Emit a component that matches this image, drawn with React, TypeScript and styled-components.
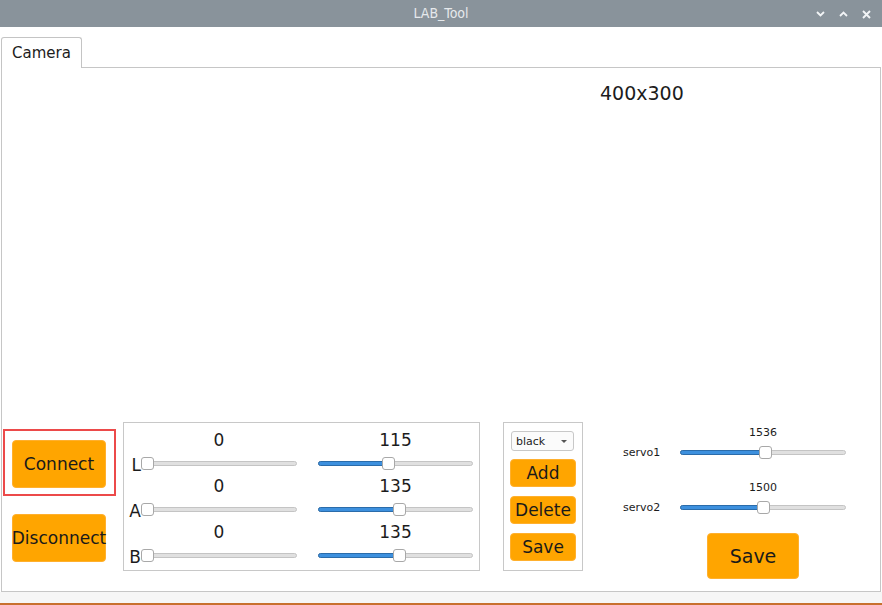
import React from 'react';
import styled, { createGlobalStyle } from 'styled-components';

const GlobalStyle = createGlobalStyle`
  html, body {
    margin: 0;
    padding: 0;
    background: #ffffff;
  }
  body {
    font-family: "DejaVu Sans", "Liberation Sans", sans-serif;
    color: #1c1c1c;
  }
`;

type SliderProps = { width: number; value: number; min: number; max: number };

const Slider = ({ width, value, min, max }: SliderProps) => {
  const pos = ((value - min) / (max - min)) * (width - 13);
  return (
    <StSlider $width={width}>
      <StGroove />
      {pos > 0 && <StFill style={{ width: pos + 6 }} />}
      <StHandle style={{ left: pos }} />
    </StSlider>
  );
};

const ChevronDown = () => (
  <svg width="9" height="6" viewBox="0 0 9 6">
    <path d="M1 1 L4.5 4.5 L8 1" fill="none" stroke="#f2f4f6" strokeWidth="1.8" />
  </svg>
);

const ChevronUp = () => (
  <svg width="9" height="6" viewBox="0 0 9 6">
    <path d="M1 5 L4.5 1.5 L8 5" fill="none" stroke="#f2f4f6" strokeWidth="1.8" />
  </svg>
);

const CloseIcon = () => (
  <svg width="9" height="9" viewBox="0 0 9 9">
    <path d="M1 1 L8 8 M8 1 L1 8" fill="none" stroke="#f2f4f6" strokeWidth="1.9" />
  </svg>
);

const channels = [
  { name: 'L', low: 0, high: 115 },
  { name: 'A', low: 0, high: 135 },
  { name: 'B', low: 0, high: 135 },
];

const servos = [
  { name: 'servo1', value: 1536 },
  { name: 'servo2', value: 1500 },
];

const App = () => {
  return (
    <StRoot>
      <GlobalStyle />
      <StTitleBar>
        <span />
        <StTitle>LAB_Tool</StTitle>
        <StControls>
          <ChevronDown />
          <ChevronUp />
          <CloseIcon />
        </StControls>
      </StTitleBar>

      <StTabBar>
        <StTab>Camera</StTab>
      </StTabBar>

      <StPane>
        <StSizeLabel>400x300</StSizeLabel>

        <StBottomRow>
          <StConnectColumn>
            <StHighlight>
              <StOrangeButton $w={94} $h={48} $size={17}>
                Connect
              </StOrangeButton>
            </StHighlight>
            <StDisconnectWrap>
              <StOrangeButton $w={94} $h={48} $size={17}>
                Disconnect
              </StOrangeButton>
            </StDisconnectWrap>
          </StConnectColumn>

          <StLabGroup>
            {channels.map((c) => (
              <React.Fragment key={c.name}>
                <StValue $col={2}>{c.low}</StValue>
                <StValue $col={4}>{c.high}</StValue>
                <StChannelLabel>{c.name}</StChannelLabel>
                <StSliderCell $col={2}>
                  <Slider width={156} value={c.low} min={0} max={255} />
                </StSliderCell>
                <StSliderCell $col={4}>
                  <Slider width={155} value={c.high} min={0} max={255} />
                </StSliderCell>
              </React.Fragment>
            ))}
          </StLabGroup>

          <StColorGroup>
            <StCombo>
              <span>black</span>
              <StComboArrow />
            </StCombo>
            <StOrangeButton $w={66} $h={28} $size={17}>
              Add
            </StOrangeButton>
            <StOrangeButton $w={66} $h={28} $size={17}>
              Delete
            </StOrangeButton>
            <StOrangeButton $w={66} $h={28} $size={17}>
              Save
            </StOrangeButton>
          </StColorGroup>

          <StServoPanel>
            {servos.map((s) => (
              <StServoBlock key={s.name}>
                <StServoValue>{s.value}</StServoValue>
                <StServoLabel>{s.name}</StServoLabel>
                <StSliderCell $col={2}>
                  <Slider width={166} value={s.value} min={500} max={2500} />
                </StSliderCell>
              </StServoBlock>
            ))}
            <StSaveWrap>
              <StOrangeButton $w={92} $h={46} $size={19}>
                Save
              </StOrangeButton>
            </StSaveWrap>
          </StServoPanel>
        </StBottomRow>
      </StPane>

      <StFooter />
      <StTaskLine />
    </StRoot>
  );
};

export default App;

const StRoot = styled.div`
  width: 882px;
  height: 605px;
  display: flex;
  flex-direction: column;
  overflow: hidden;
  background: #ffffff;
`;

const StTitleBar = styled.div`
  height: 27px;
  flex-shrink: 0;
  background: #89939b;
  display: grid;
  grid-template-columns: 1fr auto 1fr;
  align-items: center;
`;

const StTitle = styled.div`
  font-family: "DejaVu Sans Condensed", "DejaVu Sans", sans-serif;
  font-size: 14px;
  font-weight: 300;
  color: #e6e9ec;
  line-height: 27px;
`;

const StControls = styled.div`
  justify-self: end;
  display: flex;
  align-items: center;
  gap: 14px;
  padding-right: 11px;
  padding-top: 1px;
`;

const StTabBar = styled.div`
  display: flex;
  padding: 10px 0 0 1px;
  flex-shrink: 0;
`;

const StTab = styled.div`
  box-sizing: border-box;
  width: 81px;
  height: 31px;
  margin-bottom: -1px;
  padding-left: 10px;
  border: 1px solid #c4c4c4;
  border-bottom: none;
  border-radius: 3px 3px 0 0;
  background: #ffffff;
  font-size: 15px;
  line-height: 30px;
  color: #1c1c1c;
  position: relative;
  z-index: 1;
`;

const StPane = styled.div`
  box-sizing: border-box;
  width: 880px;
  height: 525px;
  margin-left: 1px;
  flex-shrink: 0;
  border: 1px solid #c6c6c6;
  display: flex;
  flex-direction: column;
  padding-bottom: 20px;
`;

const StSizeLabel = styled.div`
  margin: 14px 0 0 598px;
  font-size: 19px;
  line-height: 22px;
  color: #1c1c1c;
`;

const StBottomRow = styled.div`
  margin-top: auto;
  height: 149px;
  display: flex;
  align-items: flex-start;
`;

const StConnectColumn = styled.div`
  width: 113px;
  margin-left: 1px;
  display: flex;
  flex-direction: column;
`;

const StHighlight = styled.div`
  box-sizing: border-box;
  width: 113px;
  height: 67px;
  margin-top: 7px;
  padding: 9px 0 0 7px;
  border: 2px solid #ec4a4a;
`;

const StDisconnectWrap = styled.div`
  margin: 18px 0 0 9px;
`;

const StOrangeButton = styled.div<{ $w: number; $h: number; $size: number }>`
  box-sizing: border-box;
  width: ${({ $w }) => $w}px;
  height: ${({ $h }) => $h}px;
  border-radius: 4px;
  border: 1px solid #ffb02e;
  background: #ffa500;
  display: flex;
  align-items: center;
  justify-content: center;
  font-size: ${({ $size }) => $size}px;
  color: #1a1a1a;
  white-space: nowrap;
  overflow: visible;
`;

const StLabGroup = styled.div`
  box-sizing: border-box;
  width: 357px;
  height: 149px;
  margin-left: 7px;
  border: 1px solid #c8c8c8;
  padding-top: 6px;
  display: grid;
  grid-template-columns: 17px 156px 21px 155px;
  grid-template-rows: repeat(3, 22px 24px);
  align-content: start;
`;

const StValue = styled.div<{ $col: number }>`
  grid-column: ${({ $col }) => $col};
  font-size: 17px;
  line-height: 22px;
  text-align: center;
  color: #1c1c1c;
`;

const StChannelLabel = styled.div`
  grid-column: 1;
  font-size: 17px;
  line-height: 24px;
  text-align: right;
  padding-top: 2px;
  color: #1c1c1c;
`;

const StSliderCell = styled.div<{ $col: number }>`
  grid-column: ${({ $col }) => $col};
  display: flex;
  align-items: center;
`;

const StSlider = styled.div<{ $width: number }>`
  position: relative;
  width: ${({ $width }) => $width}px;
  height: 13px;
`;

const StGroove = styled.div`
  position: absolute;
  left: 0;
  right: 0;
  top: 4px;
  height: 5px;
  box-sizing: border-box;
  border: 1px solid #c4c4c4;
  border-radius: 3px;
  background: #e0e0e0;
`;

const StFill = styled.div`
  position: absolute;
  left: 0;
  top: 4px;
  height: 5px;
  box-sizing: border-box;
  border: 1px solid #2b6caa;
  border-radius: 3px;
  background: #3d90de;
`;

const StHandle = styled.div`
  position: absolute;
  top: 0;
  width: 13px;
  height: 13px;
  box-sizing: border-box;
  border: 1px solid #a8a8a8;
  border-radius: 3px;
  background: #ffffff;
`;

const StColorGroup = styled.div`
  box-sizing: border-box;
  width: 80px;
  height: 149px;
  margin-left: 23px;
  border: 1px solid #c8c8c8;
  padding: 8px 0 0 6px;
  display: flex;
  flex-direction: column;
  gap: 9px;
`;

const StCombo = styled.div`
  box-sizing: border-box;
  width: 63px;
  height: 20px;
  margin: 0 0 -1px 1px;
  padding: 0 6px 0 4px;
  border: 1px solid #c8c8c8;
  border-radius: 3px;
  background: #fbfbfb;
  display: flex;
  align-items: center;
  justify-content: space-between;
  font-size: 11px;
  color: #1c1c1c;
`;

const StComboArrow = styled.span`
  width: 0;
  height: 0;
  border-left: 3px solid transparent;
  border-right: 3px solid transparent;
  border-top: 3px solid #555555;
`;

const StServoPanel = styled.div`
  margin-left: 40px;
  padding-top: 3px;
  display: flex;
  flex-direction: column;
  gap: 16px;
`;

const StServoBlock = styled.div`
  display: grid;
  grid-template-columns: 57px 166px;
  grid-template-rows: 16px 23px;
`;

const StServoValue = styled.div`
  grid-column: 2;
  font-size: 11px;
  line-height: 16px;
  text-align: center;
  color: #1c1c1c;
`;

const StServoLabel = styled.div`
  grid-column: 1;
  font-size: 11px;
  line-height: 23px;
  color: #1c1c1c;
`;

const StSaveWrap = styled.div`
  margin: -2px 0 0 84px;
`;

const StFooter = styled.div`
  flex: 1;
  background: #f6f6f6;
`;

const StTaskLine = styled.div`
  height: 2px;
  flex-shrink: 0;
  background: #c8702e;
`;
